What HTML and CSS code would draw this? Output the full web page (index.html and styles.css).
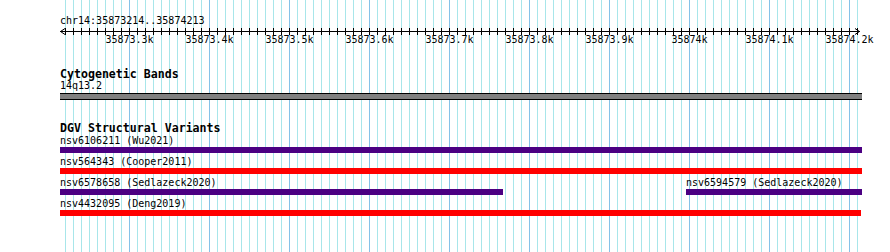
FILE: index.html
```html
<!DOCTYPE html>
<html>
<head>
<meta charset="utf-8">
<link rel="stylesheet" href="styles.css">
</head>
<body>
<div class="view">
  <svg class="grid" width="802" height="252" shape-rendering="crispEdges">
    <g id="minor" fill="#a8e6ea"></g>
    <g id="major" fill="#86c2e8"></g>
  </svg>
  <div class="loc">chr14:35873214..35874213</div>
  <svg class="ruler" width="802" height="20" viewBox="0 0 802 20">
    <g stroke="#000" stroke-width="1" fill="none" shape-rendering="crispEdges">
      <line x1="0" y1="4.5" x2="800" y2="4.5"/>
      <polyline points="5,1.5 0.5,4.5 5,7.5" shape-rendering="auto"/>
      <polyline points="795,1.5 799.5,4.5 795,7.5" shape-rendering="auto"/>
      <path id="ticks" d=""/>
    </g>
    <g class="rlabels" font-family="DejaVu Sans Mono, monospace" font-size="10" text-anchor="middle" fill="#000">
      <text x="69.5" y="16">35873.3k</text>
      <text x="149.5" y="16">35873.4k</text>
      <text x="229.5" y="16">35873.5k</text>
      <text x="309.5" y="16">35873.6k</text>
      <text x="389.5" y="16">35873.7k</text>
      <text x="469.5" y="16">35873.8k</text>
      <text x="549.5" y="16">35873.9k</text>
      <text x="629.5" y="16">35874k</text>
      <text x="709.5" y="16">35874.1k</text>
      <text x="789.5" y="16">35874.2k</text>
    </g>
  </svg>

  <section class="track cyto">
    <div class="track-label">Cytogenetic Bands</div>
    <div class="row">
      <div class="feat" style="left:0;width:802px">
        <div class="flabel">14q13.2</div>
        <div class="band"></div>
      </div>
    </div>
  </section>

  <section class="track dgv">
    <div class="track-label">DGV Structural Variants</div>
    <div class="row">
      <div class="feat" style="left:0;width:802px">
        <div class="flabel">nsv6106211 (Wu2021)</div>
        <div class="bar purple"></div>
      </div>
    </div>
    <div class="row">
      <div class="feat" style="left:0;width:802px">
        <div class="flabel">nsv564343 (Cooper2011)</div>
        <div class="bar red"></div>
      </div>
    </div>
    <div class="row">
      <div class="feat" style="left:0;width:443px">
        <div class="flabel">nsv6578658 (Sedlazeck2020)</div>
        <div class="bar purple"></div>
      </div>
      <div class="feat" style="left:626px;width:176px">
        <div class="flabel">nsv6594579 (Sedlazeck2020)</div>
        <div class="bar purple"></div>
      </div>
    </div>
    <div class="row">
      <div class="feat" style="left:0;width:801px">
        <div class="flabel">nsv4432095 (Deng2019)</div>
        <div class="bar red"></div>
      </div>
    </div>
  </section>
</div>
<script>
  (function(){
    var NS = "http://www.w3.org/2000/svg";
    var d = "";
    var minor = document.getElementById("minor");
    var major = document.getElementById("major");
    for (var x = 5; x <= 797; x += 8) {
      d += "M" + (x + 0.5) + " 1V8";
      var r = document.createElementNS(NS, "rect");
      r.setAttribute("x", x);
      r.setAttribute("y", 0);
      r.setAttribute("width", 1);
      r.setAttribute("height", 252);
      ((x - 69) % 80 === 0 ? major : minor).appendChild(r);
    }
    document.getElementById("ticks").setAttribute("d", d);
  })();
</script>
</body>
</html>
```
FILE: styles.css
```css
html, body {
  margin: 0;
  padding: 0;
  background: #fff;
}

.view {
  position: relative;
  margin-left: 60px;
  width: 802px;
  height: 252px;
  font-family: "DejaVu Sans Mono", "Liberation Mono", monospace;
  font-size: 10px;
  line-height: 12px;
  color: #000;
}

.grid {
  position: absolute;
  left: 0;
  top: 0;
  z-index: 0;
}

.loc,
.ruler,
.track {
  position: relative;
  z-index: 1;
}

.loc {
  padding-top: 15px;
  height: 12px;
  white-space: nowrap;
}

.ruler {
  display: block;
  overflow: visible;
}

.track {
  display: flex;
  flex-direction: column;
}

.track-label {
  font-weight: bold;
  font-size: 11.6px;
  white-space: nowrap;
}

.cyto {
  margin-top: 21px;
}

.cyto .track-label {
  line-height: 12px;
}

.cyto .row {
  height: 20px;
}

.dgv {
  margin-top: 21px;
}

.dgv .track-label {
  line-height: 14px;
}

.row {
  position: relative;
  height: 21px;
}

.feat {
  position: absolute;
  top: 0;
}

.flabel {
  height: 12px;
  white-space: nowrap;
}

.band {
  margin-top: 1px;
  height: 5px;
  background: #808080;
  border-top: 1px solid #000;
  border-bottom: 1px solid #000;
}

.bar {
  height: 6px;
}

.purple {
  background: #4b0082;
}

.red {
  background: #ff0000;
}
```
